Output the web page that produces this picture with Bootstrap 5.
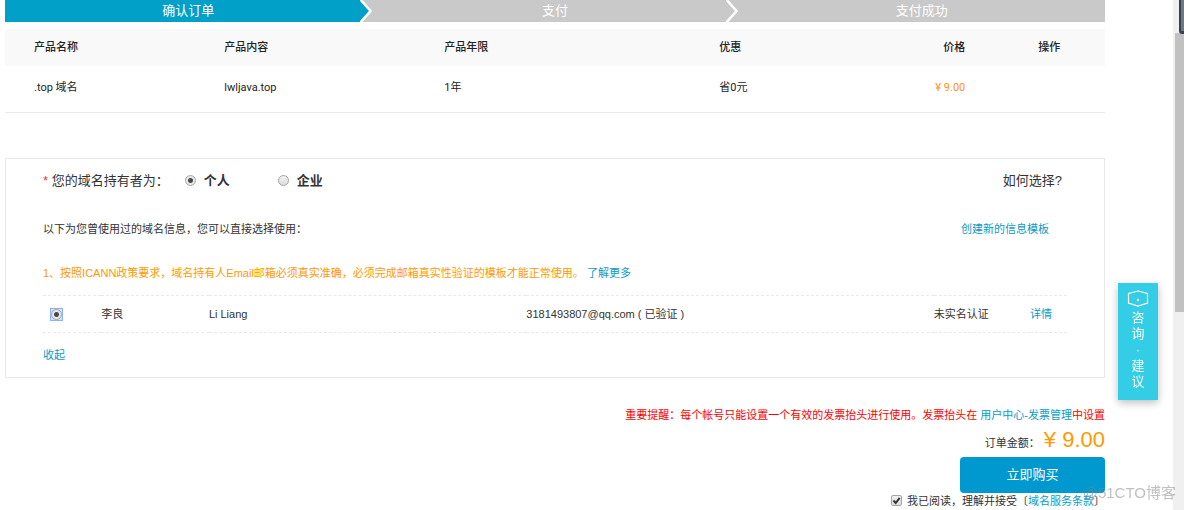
<!DOCTYPE html>
<html lang="zh-CN">
<head>
<meta charset="utf-8">
<meta name="viewport" content="width=device-width, initial-scale=1">
<title>确认订单</title>
<link href="https://cdn.jsdelivr.net/npm/bootstrap@5.3.0/dist/css/bootstrap.min.css" rel="stylesheet">
<style>
  body { font-family: "Liberation Sans", "Noto Sans CJK SC", sans-serif; font-size: 11px; line-height: 16px; color: #333; background: #fff; }
  a { color: #0a9bc6; text-decoration: none; }
  .page { margin-left: 5px; margin-right: 79px; }
  .fs-mid { font-size: 13px; }

  /* order steps */
  .steps { height: 22px; background: #c9c9c9; color: #fff; font-size: 13px; line-height: 22px; }
  .step { position: relative; flex: 1 1 0; text-align: center; }
  .step.current { background: #00a0c8; }
  .step svg { position: absolute; top: 0; left: 100%; margin-left: -12px; z-index: 1; }

  /* product table */
  .products { table-layout: fixed; font-family: Roboto, "Noto Sans CJK SC", sans-serif; color: #222; margin: 7px 0 45px; border-bottom: 1px solid #e9e9e9; }
  .products th, .products td { padding: 0 0 0 29px; font-weight: 400; }
  .products th { height: 37px; background: #f9f9f9; font-weight: 500; }
  .products td { height: 46px; padding-bottom: 2px; }
  .products .price { text-align: right; padding-left: 0; padding-right: 44px; }
  .products td.price { color: #ff9214; }
  .orange { color: #ff9900; }

  /* holder form */
  .holder { border: 1px solid #e9e9e9; padding: 14px 37px 14px 37px; }
  .how { margin-right: 5px; }
  .hint { margin-top: 32px; }
  .create { margin-right: 18px; }
  .notice { margin-top: 28px; }
  .templates { table-layout: fixed; margin: 14px 0; }
  .templates td { height: 37px; padding: 0; border-top: 1px dashed #e9e9e9; border-bottom: 1px dashed #e9e9e9; }
  input[type=radio], input[type=checkbox] { appearance: none; flex: none; width: 11px; height: 11px; margin: 0; border: 1px solid #a5a5a5; background: linear-gradient(#f2f2f2, #dcdcdc); }
  input[type=radio] { border-radius: 50%; }
  input[type=radio]:checked { background: radial-gradient(circle, #4a4a4a 0 2px, #e8e8e8 3px); }
  input[type=checkbox] { border-radius: 2px; }
  .tick-box { display: grid; }
  .tick-box > * { grid-area: 1 / 1; }
  .focus-box { display: inline-flex; padding: 0; margin-left: 7px; background: #d3e3fb; border: 1px solid #8ab4f8; vertical-align: middle; }

  /* payment */
  .payment { margin-top: 29px; }
  .reminder { color: #f00; }
  .total { font-size: 22px; line-height: 26px; }
  .btn-buy { width: 145px; height: 36px; padding: 0; border: 0; border-radius: 4px; background: #0099cf; color: #fff; font-size: 13px; }
  .agree { margin-left: 5px; }

  /* overlays */
  .feedback { position: fixed; right: 26px; top: 283px; width: 40px; padding: 7px 0 10px; background: #33cde5; color: #fff; font-size: 13px; line-height: 16px; box-shadow: 0 3px 8px rgba(0,0,0,.25); }
  .feedback svg { margin-bottom: 2px; }
  .feedback:hover { color: #fff; }
  .track { position: fixed; right: 0; top: 0; bottom: 0; width: 11px; padding: 33px 0 0 2px; background: #f0f0f0; }
  .thumb { height: 279px; background: #c1c1c1; }
  .gadget { position: absolute; right: 0; top: 0; width: 5px; height: 34px; background: #6b7a80; border-left: 2px solid #3b4150; border-bottom: 3px solid #3b4150; border-radius: 0 0 0 3px; }
  .watermark { position: fixed; right: 8px; bottom: 6px; font-size: 15px; line-height: 22px; color: rgba(130,130,130,.5); pointer-events: none; }
</style>
</head>
<body>
<main class="page">
  <div class="steps d-flex">
    <div class="step current">确认订单<svg width="14" height="22" viewBox="0 0 14 22"><path d="M0 0H14V22H0z" fill="#c9c9c9"/><path d="M0 0H1L10 11L1 22H0z" fill="#00a0c8"/><path d="M-1 -2L10.500 11L-1 24" fill="none" stroke="#fff" stroke-width="2.500"/></svg></div>
    <div class="step">支付<svg width="14" height="22" viewBox="0 0 14 22"><path d="M-1 -2L10.500 11L-1 24" fill="none" stroke="#fff" stroke-width="2.500"/></svg></div>
    <div class="step">支付成功</div>
  </div>

  <table class="products w-100">
    <colgroup><col style="width:17.3%"><col style="width:20%"><col style="width:25%"><col style="width:13%"><col style="width:16%"><col></colgroup>
    <thead><tr><th>产品名称</th><th>产品内容</th><th>产品年限</th><th>优惠</th><th class="price">价格</th><th>操作</th></tr></thead>
    <tbody><tr><td>.top 域名</td><td>lwljava.top</td><td>1年</td><td>省0元</td><td class="price">¥ 9.00</td><td></td></tr></tbody>
  </table>

  <section class="holder">
    <div class="d-flex align-items-center fs-mid">
      <span><span class="text-danger">*</span> 您的域名持有者为：</span>
      <label class="d-flex align-items-center gap-2 fw-bold ms-3" for="person"><input type="radio" name="owner" id="person" checked>个人</label>
      <label class="d-flex align-items-center gap-2 fw-bold ms-5" for="company"><input type="radio" name="owner" id="company">企业</label>
      <span class="how ms-auto">如何选择?</span>
    </div>
    <div class="hint d-flex justify-content-between">
      <span>以下为您曾使用过的域名信息，您可以直接选择使用：</span>
      <a class="create" href="#">创建新的信息模板</a>
    </div>
    <div class="notice orange">1、按照ICANN政策要求，域名持有人Email邮箱必须真实准确，必须完成邮箱真实性验证的模板才能正常使用。 <a href="#">了解更多</a></div>
    <table class="templates w-100">
      <colgroup><col style="width:5.7%"><col style="width:10.5%"><col style="width:31%"><col style="width:39.8%"><col style="width:9.4%"><col></colgroup>
      <tbody><tr>
        <td><label class="focus-box"><input type="radio" name="template" checked aria-label="李良"></label></td>
        <td>李良</td><td>Li Liang</td><td>3181493807@qq.com ( 已验证 )</td><td>未实名认证</td><td><a href="#">详情</a></td>
      </tr></tbody>
    </table>
    <a href="#">收起</a>
  </section>

  <section class="payment d-flex flex-column align-items-end">
    <div class="reminder">重要提醒：每个帐号只能设置一个有效的发票抬头进行使用。发票抬头在 <a href="#">用户中心-发票管理</a>中设置</div>
    <div class="d-flex align-items-baseline mt-1">订单金额：<span class="total orange ms-1">¥ 9.00</span></div>
    <button type="button" class="btn btn-buy mt-1">立即购买</button>
    <div class="d-flex align-items-center">
      <span class="tick-box"><input type="checkbox" id="agree" checked><svg class="pe-none" width="11" height="11" viewBox="0 0 11 11"><path d="M2.5 5.5L4.7 8L8.700 2.800" fill="none" stroke="#333" stroke-width="2"/></svg></span>
      <label class="agree" for="agree">我已阅读，理解并接受〔</label><a href="#">域名服务条款</a>〕
    </div>
  </section>
</main>

<a href="#" class="feedback d-flex flex-column align-items-center">
  <svg width="22" height="18" viewBox="0 0 22 18" fill="none" stroke="#fff" stroke-width="1.2"><path d="M11 1L20.500 3.500V13L11 16L1.500 13V3.500z"/><circle cx="11" cy="10" r=".6" fill="#fff"/></svg>
  <span>咨</span><span>询</span><span>·</span><span>建</span><span>议</span>
</a>
<div class="track" aria-hidden="true"><div class="thumb"></div><div class="gadget"></div></div>
<div class="watermark">@51CTO博客</div>
<script src="https://cdn.jsdelivr.net/npm/bootstrap@5.3.0/dist/js/bootstrap.bundle.min.js"></script>
</body>
</html>
